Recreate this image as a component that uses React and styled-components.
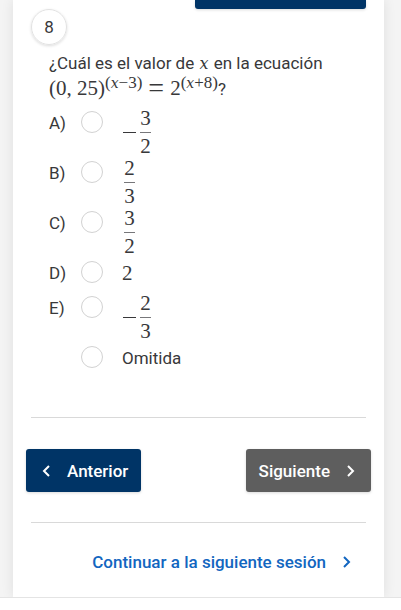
import React from "react";
import styled, { createGlobalStyle } from "styled-components";

const GlobalStyle = createGlobalStyle`
  *, *::before, *::after { box-sizing: border-box; }
  body {
    margin: 0;
    background: #fff;
    color: #38383a;
    font-family: Roboto, "Liberation Sans", sans-serif;
    font-size: 17px;
    line-height: 26px;
  }
`;

const Page = styled.main`
  padding: 0 17px 0 13px;
  background: #f4f4f4;
  border-bottom: 1px solid #e4e4e4;
`;

const Sheet = styled.article`
  padding: 0 18px 22px;
  background: #fff;
  box-shadow: 0 0 12px rgba(0, 0, 0, 0.09);
  clip-path: inset(0 -16px 0 -16px);
`;

const TopBar = styled.div`
  width: 51%;
  height: 9px;
  margin-left: auto;
  border-radius: 0 0 3px 3px;
  background: #003466;
  box-shadow: 0 1px 3px rgba(0, 0, 0, 0.15);
`;

const QuestionNumber = styled.div`
  display: flex;
  align-items: center;
  justify-content: center;
  width: 36px;
  height: 36px;
  border: 1px solid #e2e2e2;
  border-radius: 50%;
  box-shadow: 0 1px 3px rgba(0, 0, 0, 0.14);
`;

const Question = styled.fieldset`
  min-width: 0;
  margin: 5px 0 42px;
  padding: 0 0 0 18px;
  border: 0;
`;

const Statement = styled.legend`
  padding: 0;
`;

const Equation = styled.span`
  display: block;
  white-space: nowrap;
`;

const MathText = styled.span`
  font-family: "Liberation Serif", serif;
  font-size: 21px;
  line-height: 24px;
`;

const Variable = styled.i`
  margin: 0 1px;
  font-family: "DejaVu Serif", serif;
  font-size: 16px;
  line-height: 0;
`;

const Relation = styled.span`
  margin: 0 6px;
  font-size: 28px;
  line-height: 0;
  vertical-align: -2px;
`;

const Exponent = styled.sup`
  font-size: 17px;
  line-height: 0;
  vertical-align: 7px;

  ${Variable} {
    margin: 0;
    font-size: 14px;
  }
`;

const Options = styled.div`
  display: flex;
  flex-direction: column;
  padding-top: 3px;
`;

const Option = styled.label`
  display: grid;
  grid-template-columns: 32px 22px 1fr;
  align-items: start;
  height: ${({ $short }) => ($short ? "35px" : "50px")};
`;

const Letter = styled.span`
  line-height: 37px;
`;

const Radio = styled.input`
  appearance: none;
  width: 22px;
  height: 22px;
  margin: 6px 0 0;
  border: 1px solid #d2d2d2;
  border-radius: 50%;
  background: #fff;
  &:checked { border: 6px solid #003466; }
`;

const Answer = styled.span`
  display: flex;
  align-items: center;
  padding-left: 19px;
  line-height: 37px;

  ${MathText} { line-height: 37px; }
`;

const Minus = styled.span`
  width: 13px;
  height: 1px;
  margin: 0 4px 0 1px;
  background: #38383a;
`;

const Fraction = styled.span`
  display: inline-flex;
  flex-direction: column;
  align-items: center;
  margin-left: ${({ $inset }) => ($inset ? "2px" : "0")};
  font-family: "Liberation Serif", serif;
  font-size: 21px;
  line-height: 27px;
`;

const Numerator = styled.span`
  width: 11px;
  border-bottom: 1px solid #77777a;
  text-align: center;
`;

const Divider = styled.hr`
  width: 100%;
  margin: 0;
  border: 0;
  border-top: 1px solid #d9d9d9;
`;

const Navigation = styled.nav`
  display: flex;
  justify-content: space-between;
  margin: 31px -5px 30px;
`;

const NavButton = styled.button`
  display: flex;
  align-items: center;
  gap: 12px;
  height: 43px;
  padding: 0 13px;
  border: 0;
  border-radius: 3px;
  background: ${({ $muted }) => ($muted ? "#5e5e5e" : "#003466")};
  box-shadow: 0 1px 3px rgba(0, 0, 0, 0.15);
  color: #fff;
  font: 500 17px/26px Roboto, "Liberation Sans", sans-serif;
`;

const ContinueLink = styled.a`
  display: flex;
  align-items: center;
  justify-content: flex-end;
  gap: 12px;
  margin-top: 26px;
  padding-right: 12px;
  color: #1266c0;
  font-weight: 500;
  text-decoration: none;
`;

const ChevronIcon = styled.svg`
  flex: none;
  width: 16px;
  height: 16px;
  fill: none;
  stroke: currentColor;
  stroke-width: 2;
`;

function Chevron({ left }) {
  return (
    <ChevronIcon viewBox="0 0 16 16" aria-hidden="true">
      <path d={left ? "M10 3 5 8 10 13" : "M6 3 11 8 6 13"} />
    </ChevronIcon>
  );
}

const options = [
  { letter: "A)", negative: true, top: "3", bottom: "2" },
  { letter: "B)", top: "2", bottom: "3" },
  { letter: "C)", top: "3", bottom: "2" },
  { letter: "D)", number: "2" },
  { letter: "E)", negative: true, top: "2", bottom: "3" },
  { letter: "", text: "Omitida" },
];

function OptionRow({ option }) {
  const { letter, negative, top, bottom, number, text } = option;
  return (
    <Option $short={!top}>
      <Letter>{letter}</Letter>
      <Radio type="radio" name="answer" />
      <Answer>
        {negative && <Minus role="img" aria-label="−" />}
        {top && (
          <Fraction $inset={!negative}>
            <Numerator>{top}</Numerator>
            <span>{bottom}</span>
          </Fraction>
        )}
        {number && <MathText>{number}</MathText>}
        {text}
      </Answer>
    </Option>
  );
}

export default function App() {
  return (
    <>
      <GlobalStyle />
      <Page>
        <Sheet>
          <TopBar />
          <QuestionNumber>8</QuestionNumber>
          <Question>
            <Statement>
              ¿Cuál es el valor de <Variable>x</Variable> en la ecuación
              <Equation>
                <MathText>
                  (0, 25)<Exponent>(<Variable>x</Variable>−3)</Exponent>
                  <Relation>=</Relation>
                  2<Exponent>(<Variable>x</Variable>+8)</Exponent>
                </MathText>
                ?
              </Equation>
            </Statement>
            <Options>
              {options.map((option) => (
                <OptionRow key={option.letter || option.text} option={option} />
              ))}
            </Options>
          </Question>
          <Divider />
          <Navigation>
            <NavButton type="button"><Chevron left />Anterior</NavButton>
            <NavButton type="button" $muted>Siguiente<Chevron /></NavButton>
          </Navigation>
          <Divider />
          <ContinueLink href="#siguiente">Continuar a la siguiente sesión<Chevron /></ContinueLink>
        </Sheet>
      </Page>
    </>
  );
}
